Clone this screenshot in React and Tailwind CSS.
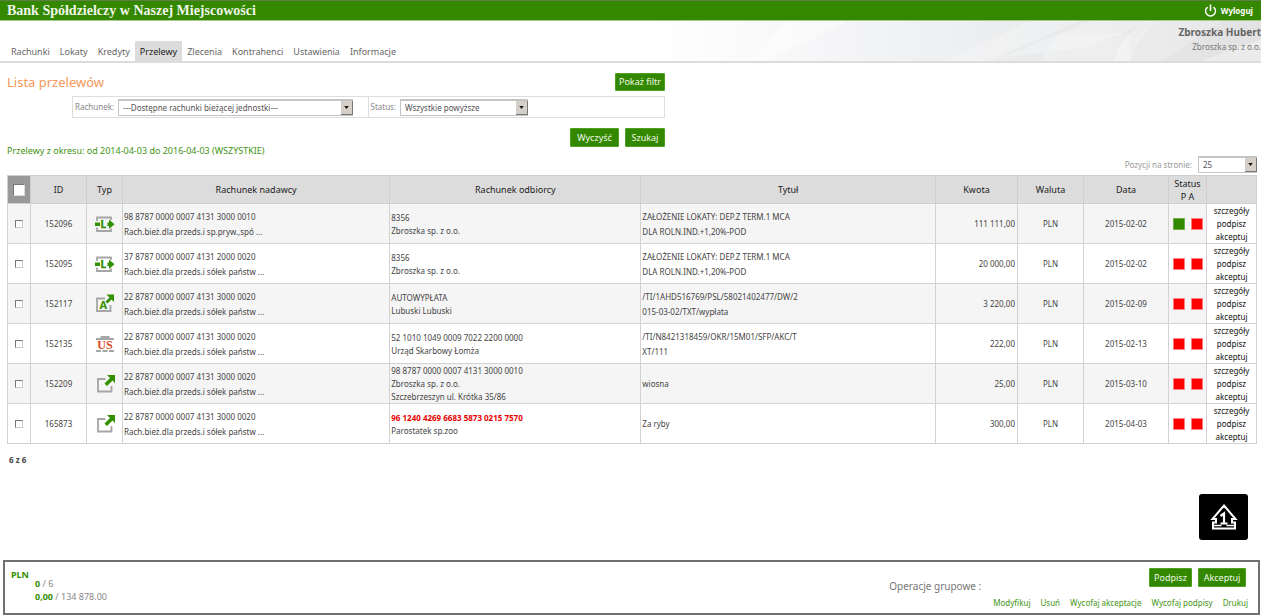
import React, { useState } from 'react'
import { Power } from 'lucide-react'

const menu = ["Rachunki", "Lokaty", "Kredyty", "Przelewy", "Zlecenia", "Kontrahenci", "Ustawienia", "Informacje"]

const transfers = [
    { id: "152096", type: "deposit", from: ["98 8787 0000 0007 4131 3000 0010", "Rach.bież.dla przeds.i sp.pryw.,spó ..."], to: ["8356", "Zbroszka sp. z o.o."], title: ["ZAŁOŻENIE LOKATY: DEP.Z TERM.1 MCA", "DLA ROLN.IND.+1,20%-POD"], amount: "111 111,00", date: "2015-02-02", signed: true },
    { id: "152095", type: "deposit", from: ["37 8787 0000 0007 4131 2000 0020", "Rach.bież.dla przeds.i sółek państw ..."], to: ["8356", "Zbroszka sp. z o.o."], title: ["ZAŁOŻENIE LOKATY: DEP.Z TERM.1 MCA", "DLA ROLN.IND.+1,20%-POD"], amount: "20 000,00", date: "2015-02-02" },
    { id: "152117", type: "auto", from: ["22 8787 0000 0007 4131 3000 0020", "Rach.bież.dla przeds.i sółek państw ..."], to: ["AUTOWYPŁATA", "Lubuski Lubuski"], title: ["/TI/1AHD516769/PSL/58021402477/DW/2", "015-03-02/TXT/wypłata"], amount: "3 220,00", date: "2015-02-09" },
    { id: "152135", type: "tax", from: ["22 8787 0000 0007 4131 3000 0020", "Rach.bież.dla przeds.i sółek państw ..."], to: ["52 1010 1049 0009 7022 2200 0000", "Urząd Skarbowy Łomża"], title: ["/TI/N8421318459/OKR/15M01/SFP/AKC/T", "XT/111"], amount: "222,00", date: "2015-02-13" },
    { id: "152209", type: "external", from: ["22 8787 0000 0007 4131 3000 0020", "Rach.bież.dla przeds.i sółek państw ..."], to: ["98 8787 0000 0007 4131 3000 0010", "Zbroszka sp. z o.o.", "Szczebrzeszyn ul. Krótka 35/86"], title: ["wiosna"], amount: "25,00", date: "2015-03-10" },
    { id: "165873", type: "external", from: ["22 8787 0000 0007 4131 3000 0020", "Rach.bież.dla przeds.i sółek państw ..."], to: ["96 1240 4269 6683 5873 0215 7570", "Parostatek sp.zoo"], title: ["Za ryby"], amount: "300,00", date: "2015-04-03", warn: true },
]

function TypeIcon({ type }) {
    if (type === "deposit") {
        return (
            <svg viewBox="0 0 20 16" className="mx-auto block h-4 w-5" aria-hidden="true">
                <path d="M2 5V1.500h14V4M2 11.500V15h14v-2.500" fill="none" stroke="#a6a6a6" strokeWidth="1.8" />
                <path d="M0 6.500h5v3.500H0zM12.500 6.500h1.500V3.500l5.500 4.700-5.500 4.700V10h-1.500z" fill="#339000" />
                <text x="5.500" y="12" fontSize="10" fontWeight="bold" fontFamily="Noto Sans, sans-serif" fill="#339000" stroke="#339000" strokeWidth=".4">L</text>
            </svg>
        )
    }
    if (type === "auto") {
        return (
            <svg viewBox="0 0 20 20" className="mx-auto block size-5" aria-hidden="true">
                <path d="M10 4.500H2v12.500h13.500v-6" fill="none" stroke="#a6a6a6" strokeWidth="1.800" />
                <path d="M11.500 .5H19V8l-2.500-2.500-4 4-2-2 4-4z" fill="#339000" />
                <text x="4.500" y="15" fontSize="11" fontWeight="bold" fontFamily="Noto Sans, sans-serif" fill="#339000">A</text>
            </svg>
        )
    }
    if (type === "tax") {
        return (
            <svg viewBox="0 0 20 18" className="mx-auto block h-[18px] w-5" aria-hidden="true">
                <path d="M5.500 2h9M1 4h18" stroke="#a6a6a6" strokeWidth="1.800" />
                <path d="M1 16h18" stroke="#a6a6a6" strokeWidth="1.800" strokeDasharray="5 1.500" />
                <text x="10" y="13.500" textAnchor="middle" fontSize="12" fontWeight="bold" fontFamily="Liberation Serif, serif" fill="#e0451a">US</text>
            </svg>
        )
    }
    return (
        <svg viewBox="0 0 20 20" className="mx-auto block size-5" aria-hidden="true">
            <path d="M10.500 5H3v12.500h13.500V12" fill="none" stroke="#a6a6a6" strokeWidth="1.800" />
            <path d="M12 1h8v8l-2.500-2.500-5.500 5.500-2.500-2.500L15 4z" fill="#339000" />
        </svg>
    )
}

function Select({ id, options, className }) {
    return (
        <span className={"relative inline-flex " + className}>
            <select id={id} className="h-[17px] w-full appearance-none border border-t-2 border-[#c4c4c4] bg-white pr-4 pl-1 text-[8px] leading-3 text-[#555]">
                {options.map((option) => <option key={option}>{option}</option>)}
            </select>
            <span className="pointer-events-none absolute top-0.5 right-0 flex h-[14px] w-3 items-center justify-center border-r border-b border-[#777] bg-[#d4d0c8]">
                <svg viewBox="0 0 6 4" className="h-[3px] w-[5px]" aria-hidden="true"><path d="M0 0h6L3 4z" fill="#111" /></svg>
            </span>
        </span>
    )
}

function GreenButton({ children, className }) {
    return (
        <button type="button" className={"rounded-[1px] border border-[#4da020] bg-[#338800] text-center text-[9px] text-[#f0f8e8] hover:bg-[#2b7300] " + className}>
            {children}
        </button>
    )
}

function StatusBox({ ok }) {
    return <span className={"inline-block size-3 border " + (ok ? "border-[#70ad4c] bg-[#338800]" : "border-[#ff8080] bg-[#ff0000]")}></span>
}

export default function App() {
    const [selected, setSelected] = useState([])
    const allSelected = selected.length === transfers.length

    const toggle = (id) => {
        setSelected(selected.includes(id) ? selected.filter((s) => s !== id) : [...selected, id])
    }

    const toggleAll = () => {
        setSelected(allSelected ? [] : transfers.map((t) => t.id))
    }

    return (
        <div className="flex min-h-screen flex-col bg-white font-['Noto_Sans',sans-serif] text-[8px] text-[#444]">
            {/* Top bar */}
            <header>
                <div className="flex h-[21px] items-center justify-between border-t border-b border-t-[#5b7f45] border-b-[#a5cc8c] bg-[#338800] pr-2 pl-[7px] text-white">
                    <h1 className="font-['Liberation_Serif',serif] text-[14px] leading-5 font-bold text-[#f0f6ea]">Bank Spółdzielczy w Naszej Miejscowości</h1>
                    <a href="#logout" className="flex items-center gap-1 text-[8px] font-bold">
                        <Power size={13} strokeWidth={3} aria-hidden="true" />
                        Wyloguj
                    </a>
                </div>
                <div className="relative flex h-[42px] justify-between border-b-2 border-[#dcdcdc]">
                    <svg viewBox="0 0 600 40" preserveAspectRatio="none" className="absolute inset-y-0 right-0 h-full w-[48%]" aria-hidden="true">
                        <defs>
                            <linearGradient id="haze">
                                <stop offset="0" stopColor="#ffffff" />
                                <stop offset=".4" stopColor="#f1f2f4" />
                                <stop offset=".65" stopColor="#e9eaeb" />
                                <stop offset="1" stopColor="#e2e2e2" />
                            </linearGradient>
                        </defs>
                        <path d="M0 0h600v40H0z" fill="url(#haze)" />
                        <path d="M130 0h60L110 40H90z" fill="#fff" opacity=".4" />
                        <path d="M370 0h50L330 40h-45z" fill="#fff" opacity=".25" />
                        <path d="M345 36L430 0h60l-60 26z" fill="#fff" opacity=".25" />
                        <path d="M400 12h70v28h-90z" fill="#fff" opacity=".25" />
                        <path d="M500 0h-12q-28 14-34 40h18q2-26 28-40z" fill="#fff" opacity=".3" />
                        <path d="M500 0q-30 12-27 40h28l60-40z" fill="#fff" opacity=".2" />
                        <path d="M600 18l-60 22h60z" fill="#fff" opacity=".3" />
                    </svg>
                    <nav className="relative flex items-end pl-[6px]">
                        {menu.map((item) => (
                            <a
                                key={item}
                                href={"#" + item.toLowerCase()}
                                className={"h-5 rounded-t-[1px] px-[5px] text-[9px] leading-[22px] " + (item === "Przelewy" ? "bg-[#dcdcdc] text-[#222]" : "text-[#666]")}
                            >
                                {item}
                            </a>
                        ))}
                    </nav>
                    <div className="relative pt-1 text-right text-[#777]">
                        <p className="text-[10px] leading-[14px] font-bold text-[#666]">Zbroszka Hubert</p>
                        <p className="text-[8px] leading-4">Zbroszka sp. z o.o.</p>
                    </div>
                </div>
            </header>

            <main className="pr-1 pl-[7px]">
                {/* Filters */}
                <section className="w-full max-w-[658px]">
                    <div className="flex items-center justify-between pt-2.5">
                        <h2 className="text-[13px] leading-[18px] text-[#f5985a]">Lista przelewów</h2>
                        <GreenButton className="h-[18px] w-[50px] leading-4">Pokaż filtr</GreenButton>
                    </div>
                    <div className="mt-[5px] ml-[65px] flex h-[22px] border border-[#dedede] text-[#888]">
                        <div className="flex w-1/2 items-center gap-1 border-r border-[#dedede] pl-0.5">
                            <label htmlFor="account">Rachunek:</label>
                            <Select id="account" options={["---Dostępne rachunki bieżącej jednostki---"]} className="w-[235px]" />
                        </div>
                        <div className="flex w-1/2 items-center gap-1 pl-0.5">
                            <label htmlFor="status">Status:</label>
                            <Select id="status" options={["Wszystkie powyższe"]} className="w-32" />
                        </div>
                    </div>
                    <div className="mt-2.5 flex justify-end gap-1.5">
                        <GreenButton className="h-[19px] w-[49px] leading-4">Wyczyść</GreenButton>
                        <GreenButton className="h-[19px] w-10 leading-4">Szukaj</GreenButton>
                    </div>
                </section>
                <p className="-mt-0.5 text-[9px] leading-3 text-[#3f9414]">Przelewy z okresu: od 2014-04-03 do 2016-04-03 (WSZYSTKIE)</p>
                <div className="-mt-px flex items-center justify-end gap-1.5 pb-0.5 text-[#999]">
                    <label htmlFor="perPage">Pozycji na stronie:</label>
                    <Select id="perPage" options={["25", "50", "100"]} className="w-[59px]" />
                </div>

                {/* Transfers table */}
                <table className="w-full table-fixed border-collapse [&_td]:border [&_td]:border-[#d2d2d2] [&_th]:border [&_th]:border-[#cfcfcf]">
                    <colgroup>
                        <col className="w-[23px]" />
                        <col className="w-[56px]" />
                        <col className="w-9" />
                        <col className="w-[21.4%]" />
                        <col className="w-[20.1%]" />
                        <col />
                        <col className="w-[82px]" />
                        <col className="w-[66px]" />
                        <col className="w-[85px]" />
                        <col className="w-[38px]" />
                        <col className="w-[50px]" />
                    </colgroup>
                    <thead>
                        <tr className="h-7 bg-[#dcdcdc] text-[9px] leading-[13px] text-[#222] [&_th]:font-normal">
                            <th className="bg-[#999]">
                                <input
                                    type="checkbox"
                                    aria-label="Zaznacz wszystkie"
                                    checked={allSelected}
                                    onChange={toggleAll}
                                    className="mx-auto block size-3 appearance-none border border-t-[#777] border-r-[#ddd] border-b-[#ddd] border-l-[#777] bg-white checked:bg-[#338800]"
                                />
                            </th>
                            <th>ID</th>
                            <th>Typ</th>
                            <th>Rachunek nadawcy</th>
                            <th>Rachunek odbiorcy</th>
                            <th>Tytuł</th>
                            <th>Kwota</th>
                            <th>Waluta</th>
                            <th>Data</th>
                            <th>Status<br />P A</th>
                            <th></th>
                        </tr>
                    </thead>
                    <tbody>
                        {transfers.map((t) => (
                            <tr key={t.id} className="h-10 odd:bg-[#f5f5f5]">
                                <td>
                                    <input
                                        type="checkbox"
                                        aria-label={t.id}
                                        checked={selected.includes(t.id)}
                                        onChange={() => toggle(t.id)}
                                        className="mx-auto block size-2 appearance-none border border-t-[#777] border-r-[#ccc] border-b-[#ccc] border-l-[#777] bg-white checked:bg-[#338800]"
                                    />
                                </td>
                                <td className="text-center">{t.id}</td>
                                <td><TypeIcon type={t.type} /></td>
                                <td className="pl-px leading-[15px]">
                                    {t.from.map((line) => <div key={line}>{line}</div>)}
                                </td>
                                <td className="pl-px leading-[13px]">
                                    {t.to.map((line, index) => (
                                        <div key={line} className={t.warn && index === 0 ? "font-bold text-[#e80000]" : ""}>{line}</div>
                                    ))}
                                </td>
                                <td className="pl-px leading-[15px]">
                                    {t.title.map((line) => <div key={line}>{line}</div>)}
                                </td>
                                <td className="pr-0.5 text-right">{t.amount}</td>
                                <td className="text-center">PLN</td>
                                <td className="text-center">{t.date}</td>
                                <td>
                                    <div className="flex justify-center gap-1.5">
                                        <StatusBox ok={t.signed} />
                                        <StatusBox />
                                    </div>
                                </td>
                                <td className="bg-white text-center leading-[13px] text-[#111]">
                                    {["szczegóły", "podpisz", "akceptuj"].map((action) => (
                                        <a key={action} href={"#" + action} className="block">{action}</a>
                                    ))}
                                </td>
                            </tr>
                        ))}
                    </tbody>
                </table>
                <p className="mt-2.5 pl-0.5 text-[8px] font-bold">6 z 6</p>
            </main>

            <button type="button" aria-label="Do góry" className="mt-auto mr-[13px] mb-5 flex h-[46px] w-[49px] items-center justify-center self-end rounded-[3px] bg-black">
                <svg viewBox="0 0 28 28" className="size-7" aria-hidden="true">
                    <path d="M14 2.500L25.500 16H22v3.500h3V25.500H3V19.500h3V16H2.500z" fill="none" stroke="#fff" strokeWidth="2" />
                    <path d="M3 22.500h8.500M16.500 22.500H25" stroke="#fff" strokeWidth="1.500" />
                    <path d="M10.500 13l3.500-2.500V20.500M10.500 20.500h7" fill="none" stroke="#fff" strokeWidth="2.200" />
                </svg>
            </button>

            {/* Summary */}
            <footer className="mx-[3px] mr-px flex h-[55px] justify-between border-2 border-[#707070] pr-2.5 pl-1.5">
                <dl className="flex pt-1.5 text-[9px] leading-[13px] text-[#888]">
                    <dt className="w-6 font-bold text-[#339000]">PLN</dt>
                    <dd className="pt-[9px]">
                        <p><b className="text-[#339000]">0</b> / 6</p>
                        <p><b className="text-[#339000]">0,00</b> / 134 878.00</p>
                    </dd>
                </dl>
                <div className="flex gap-3">
                    <span className="pt-[17px] text-[10px] leading-[14px] text-[#777]">Operacje grupowe :</span>
                    <div className="flex flex-col items-end pt-[6px]">
                        <div className="flex gap-1.5 pr-0.5">
                            <GreenButton className="h-[19px] w-[43px] leading-4">Podpisz</GreenButton>
                            <GreenButton className="h-[19px] w-12 leading-4">Akceptuj</GreenButton>
                        </div>
                        <div className="mt-2.5 flex gap-2.5 text-[8px] leading-3 text-[#3f9414]">
                            {["Modyfikuj", "Usuń", "Wycofaj akceptacje", "Wycofaj podpisy", "Drukuj"].map((item) => (
                                <a key={item} href="#operacje">{item}</a>
                            ))}
                        </div>
                    </div>
                </div>
            </footer>
        </div>
    )
}
